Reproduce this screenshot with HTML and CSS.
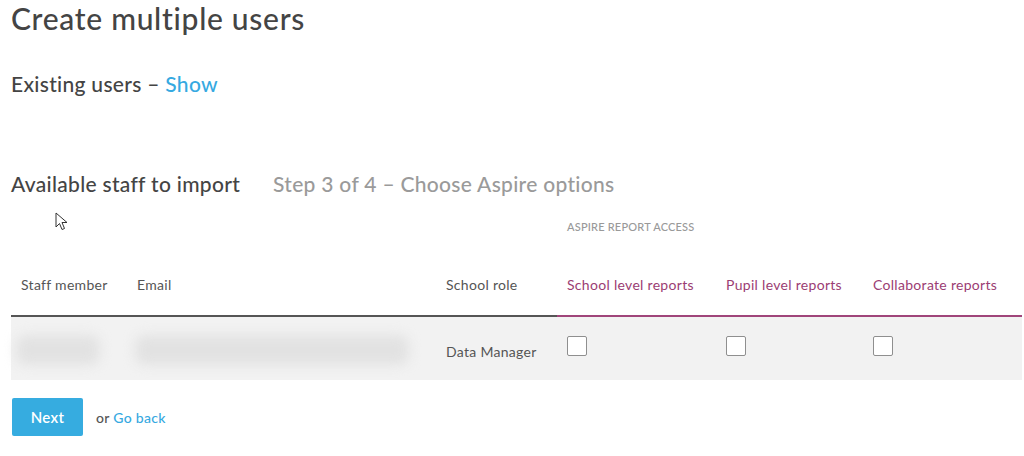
FILE: index.html
```html
<!DOCTYPE html>
<html>
<head>
<meta charset="utf-8">
<link rel="stylesheet" href="styles.css">
</head>
<body>
<div class="page">
  <h1 class="title">Create multiple users</h1>
  <h2 class="existing">Existing users – <a class="link">Show</a></h2>
  <div class="section-head">
    <h2 class="available">Available staff to import</h2>
    <span class="step">Step 3 of 4 – Choose Aspire options</span>
  </div>
  <svg class="cursor" width="14" height="20" viewBox="0 0 14 20"><path d="M1 1 L1 15 L4.5 11.5 L7 17.5 L9.5 16.5 L7 10.5 L12 10.5 Z" fill="#fff" stroke="#333" stroke-width="1" stroke-linejoin="round"/></svg>
  <table class="staff">
    <thead>
      <tr class="group-row">
        <th></th><th></th><th></th>
        <th colspan="3" class="group">ASPIRE REPORT ACCESS</th>
      </tr>
      <tr class="col-row">
        <th class="c-staff">Staff member</th>
        <th class="c-email">Email</th>
        <th class="c-role">School role</th>
        <th class="c-aspire c-school">School level reports</th>
        <th class="c-aspire c-pupil">Pupil level reports</th>
        <th class="c-aspire c-collab">Collaborate reports</th>
      </tr>
    </thead>
    <tbody>
      <tr>
        <td class="blur-cell"><div class="blur blur-name"></div></td>
        <td class="blur-cell"><div class="blur blur-email"></div></td>
        <td class="role">Data Manager</td>
        <td class="check first"><span class="box"></span></td>
        <td class="check"><span class="box"></span></td>
        <td class="check"><span class="box"></span></td>
      </tr>
    </tbody>
  </table>
  <div class="actions">
    <button class="btn">Next</button>
    <span class="or">or <a class="link">Go back</a></span>
  </div>
</div>
</body>
</html>
```
FILE: styles.css
```css
* { box-sizing: border-box; }
html, body { margin: 0; padding: 0; background: #fff; }
body { font-family: Lato, "Open Sans", sans-serif; color: #4a4a4a; }
.page { position: relative; padding: 0 2px 0 11px; }
.title { margin: 0; padding-top: 1px; font-size: 30px; font-weight: 500; color: #444; line-height: 34px; letter-spacing: 0.7px; }
.existing { margin: 36px 0 0; font-size: 21px; font-weight: 500; color: #444; line-height: 26px; letter-spacing: 0.3px; }
.link { color: #36a9e1; text-decoration: none; cursor: pointer; }
.section-head { display: flex; align-items: baseline; gap: 33px; margin-top: 74px; }
.available { margin: 0; font-size: 21px; font-weight: 500; color: #444; line-height: 26px; letter-spacing: 0.3px; }
.step { font-size: 21px; font-weight: 500; color: #9a9a9a; line-height: 26px; letter-spacing: 0.3px; }
.cursor { position: absolute; left: 55px; top: 212px; }
.staff { width: 1011px; border-collapse: collapse; margin-top: 6px; }
.staff th { font-weight: 400; text-align: left; padding: 0; }
.group-row th { height: 30px; vertical-align: bottom; }
.group { font-size: 11px; color: #999; padding-left: 10px !important; letter-spacing: 0.2px; font-weight: 500 !important; }
.col-row th { height: 83px; padding-top: 20px; font-size: 14px; letter-spacing: 0.3px; color: #555; border-bottom: 2px solid #555; vertical-align: middle; }
.col-row th.c-aspire { color: #9b3d73; border-bottom-color: #a0457a; }
.col-row th.c-staff { width: 126px; padding-left: 10px; }
.c-email { width: 309px; }
.c-role { width: 111px; }
.col-row th.c-school { width: 169px; padding-left: 10px; }
.c-pupil { width: 147px; }
.staff tbody tr { background: #f2f2f2; height: 64px; }
.staff td { padding: 0; vertical-align: top; }
.blur-cell { padding-top: 18px !important; }
.role { font-size: 14px; letter-spacing: 0.3px; color: #555; line-height: 16px; padding-top: 27px !important; }
.blur { height: 30px; background: #e2e2e2; filter: blur(6px); border-radius: 10px; }
.blur-name { width: 84px; margin-left: 5px; }
.blur-email { width: 274px; margin-left: -2px; }
.check { padding-top: 19px !important; }
.check.first { padding-left: 10px !important; }
.box { display: block; width: 20px; height: 20px; border: 1px solid #8f8f8f; background: #fff; border-radius: 2px; }
.actions { display: flex; align-items: center; gap: 13px; margin-top: 18px; }
.btn { width: 71px; height: 38px; margin-left: 1px; border: 0; border-radius: 2px; background: #36ace0; color: #fff; font-family: Lato, sans-serif; font-size: 15px; font-weight: 600; letter-spacing: 0.3px; cursor: pointer; }
.or { font-size: 14px; font-weight: 500; letter-spacing: 0.3px; color: #555; }
```
